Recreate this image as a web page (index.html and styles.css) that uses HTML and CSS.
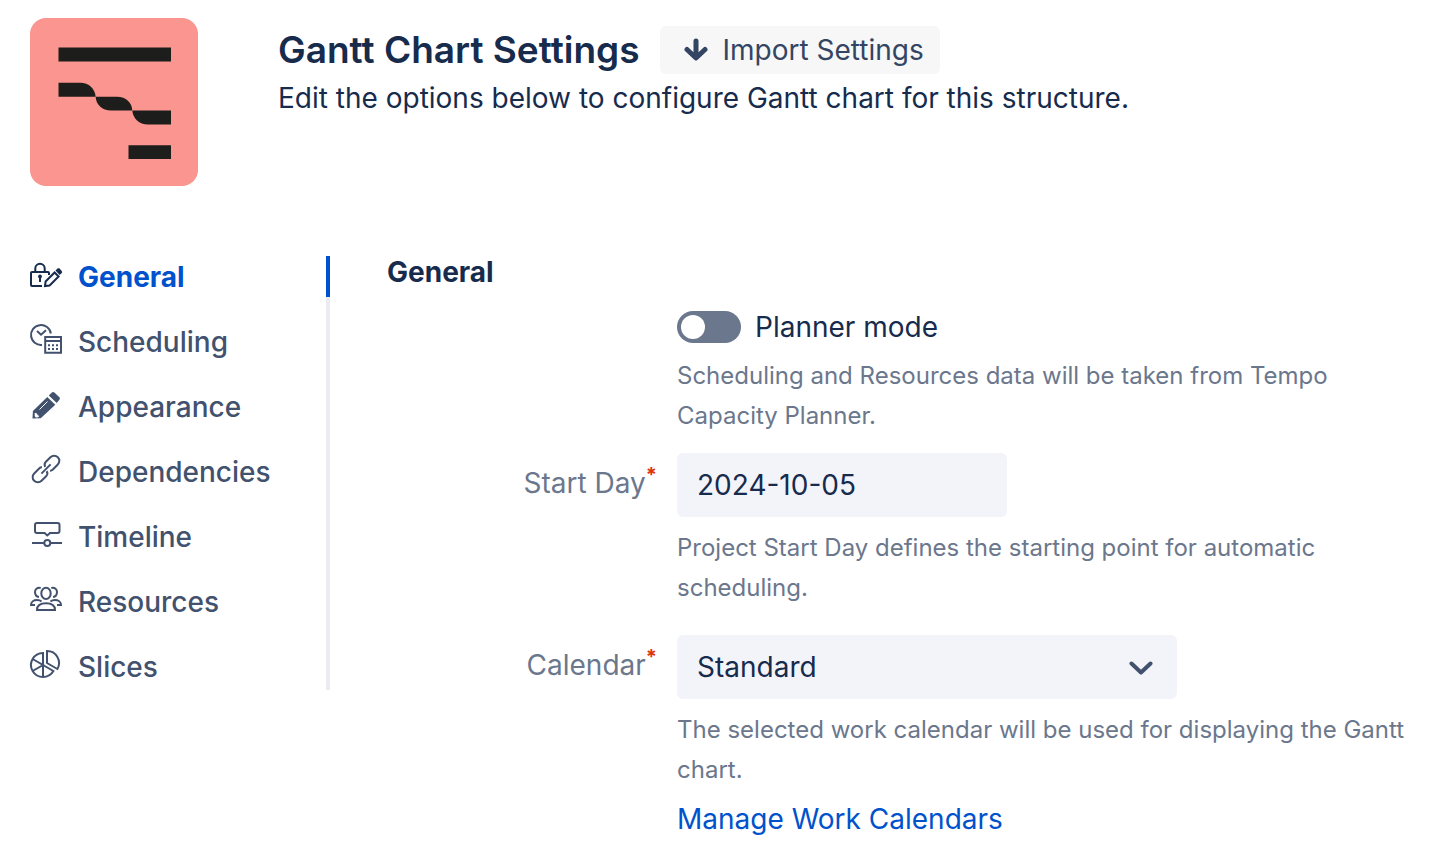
FILE: index.html
```html
<!DOCTYPE html>
<html lang="en">
<head>
    <meta charset="UTF-8">
    <meta name="viewport" content="width=device-width, initial-scale=1.0">
    <title>Gantt Chart Settings</title>
    <link rel="stylesheet" href="styles.css">
</head>
<body>
    <header class="header">
        <svg class="logo" viewBox="0 0 168 168" aria-hidden="true">
            <rect width="168" height="168" rx="16" fill="#fb958f"/>
            <g fill="#1d1e1b">
                <path d="M28.5 29.5H141v14H28.5z"/>
                <path d="M28.5 64.7H50c9 0 15 6 15.600 14H28.500z"/>
                <path d="M65.600 78.700H87c9 0 15 6 15.300 13.700H81c-9 0-15-6-15.400-13.700z"/>
                <path d="M102.300 92.400H141v14h-23c-9 0-15-6-15.700-14z"/>
                <path d="M98.500 127.300H141V141H98.500z"/>
            </g>
        </svg>
        <div class="header-text">
            <div class="title-row">
                <h1>Gantt Chart Settings</h1>
                <button type="button" class="import-button">
                    <svg class="arrow-icon" viewBox="0 0 24 24" aria-hidden="true">
                        <path d="M12 3v16M3 11.500l9 8.500 9-8.500"/>
                    </svg>
                    Import Settings
                </button>
            </div>
            <p>Edit the options below to configure Gantt chart for this structure.</p>
        </div>
    </header>

    <div class="content">
        <nav class="sidebar">
            <a href="#general" class="active">
                <svg viewBox="0 0 32 41" aria-hidden="true">
                    <path d="M5.300 16v-3.500a4.700 4.700 0 0 1 9.400 0V16M19 19v-2q0-1-1-1H2q-1 0-1 1v12q0 1 1 1h10"/>
                    <path d="M10 21v5"/>
                    <circle cx="10" cy="20.500" r="1.900" class="solid"/>
                    <path d="M15 30l.6-4.500 9-9 4 4-9 9z"/>
                    <path class="solid" d="M25.500 14.500l2.300-2.200h1.500l2.700 2.900v1.500L29.700 19z"/>
                </svg>
                General
            </a>
            <a href="#scheduling">
                <svg viewBox="0 0 32 41" aria-hidden="true">
                    <path d="M20.900 12.500A10 10 0 1 0 12 24M7 10l4 3.700 5-4.500"/>
                    <path d="M15.200 16H31v15.700H15.200zM15.200 20H31"/>
                    <path d="M18 24.300h2m2 0h2m2 0h2M18 28h2m2 0h2m2 0h2"/>
                </svg>
                Scheduling
            </a>
            <a href="#appearance">
                <svg viewBox="0 0 32 41" aria-hidden="true">
                    <path class="solid" d="M2.500 32.600l.4-7.600L17.300 11l8 7.700-14.600 13.500z"/>
                    <path class="solid" d="M18.800 9.600l3-3q1.300-1 2.600 0l5 4.700q1 1.200 0 2.500l-2.700 3.300z"/>
                    <path class="cut" d="M9.500 23.500l8-8"/>
                    <path class="cut-fill" d="M4.700 26.700l2.300.8.700 1.800 1.800.6-2 1.500-1.800.1-1-1.400z"/>
                </svg>
                Appearance
            </a>
            <a href="#dependencies">
                <svg viewBox="0 0 32 41" aria-hidden="true">
                    <g transform="rotate(-45 16 18)">
                        <path d="M17 16q.8-3.200 4-3.200h6.500a5.200 5.200 0 0 1 0 10.400H20.500q-1.800 0-2.800-1.200"/>
                        <path d="M15 20q-.8 3.200-4 3.200H4.500a5.200 5.200 0 0 1 0-10.400H11.500q1.800 0 2.800 1.200"/>
                        <path d="M9.500 18h13"/>
                    </g>
                </svg>
                Dependencies
            </a>
            <a href="#timeline">
                <svg viewBox="0 0 32 41" aria-hidden="true">
                    <path d="M7 7h20.500q2 0 2 2v6q0 2-2 2H20l-2.700 2.500-2.700-2.500H7q-2 0-2-2V9q0-2 2-2z"/>
                    <path d="M2 27h12M20.500 27H32"/>
                    <circle cx="17.300" cy="27" r="3"/>
                </svg>
                Timeline
            </a>
            <a href="#resources">
                <svg viewBox="0 0 32 41" aria-hidden="true">
                    <ellipse cx="16" cy="12.400" rx="4.700" ry="5.700"/>
                    <path d="M10.700 7C7 6 5 8.500 5 11q0 4.500 4 5M21.300 7C25 6 27 8.500 27 11q0 4.500-4 5"/>
                    <path d="M7 29c0-4 3-6.700 9-6.700s9 2.700 9 6.700z"/>
                    <path d="M5 24H1c0-3.500 3-5 6-5q3 0 4.500 1.500M27 24h4c0-3.500-3-5-6-5q-3 0-4.500 1.500"/>
                </svg>
                Resources
            </a>
            <a href="#slices">
                <svg viewBox="0 0 32 41" aria-hidden="true">
                    <path d="M13 7a12 12 0 1 0 10.400 18L13 19zM13 19v12M2.600 13L13 19 2.600 25"/>
                    <path d="M17 5v12l10.400 6A12 12 0 0 0 17 5z"/>
                </svg>
                Slices
            </a>
        </nav>

        <main class="settings">
            <h2>General</h2>
            <form>
                <div class="field">
                    <div class="field-body">
                        <div class="toggle-row">
                            <input type="checkbox" id="plannerMode" class="toggle">
                            <label for="plannerMode">Planner mode</label>
                        </div>
                        <p class="help">Scheduling and Resources data will be taken from Tempo Capacity Planner.</p>
                    </div>
                </div>

                <div class="field">
                    <label class="field-label" for="startDay">Start Day<span class="required">*</span></label>
                    <div class="field-body">
                        <input type="text" id="startDay" class="text-input" value="2024-10-05">
                        <p class="help">Project Start Day defines the starting point for automatic scheduling.</p>
                    </div>
                </div>

                <div class="field">
                    <label class="field-label" for="calendar">Calendar<span class="required">*</span></label>
                    <div class="field-body">
                        <div class="select-box">
                            <select id="calendar">
                                <option>Standard</option>
                            </select>
                            <svg viewBox="0 0 24 24" aria-hidden="true">
                                <path d="M2.500 8.500l9.500 9 9.500-9"/>
                            </svg>
                        </div>
                        <p class="help">The selected work calendar will be used for displaying the Gantt chart.</p>
                        <a href="#calendars" class="manage-link">Manage Work Calendars</a>
                    </div>
                </div>
            </form>
        </main>
    </div>
</body>
</html>
```
FILE: styles.css
```css
/* Basic Styles */
* {
    box-sizing: border-box;
}

body {
    font-family: Inter, sans-serif;
    font-size: 28px;
    line-height: 40px;
    color: #172b4d;
    background-color: white;
    margin: 0;
    padding: 18px 30px 16px;
}

h1, h2, p {
    margin: 0;
}

a {
    text-decoration: none;
}

/* Header */
.header {
    display: flex;
    gap: 80px;
    margin-bottom: 70px;
}

.logo {
    width: 168px;
    height: 168px;
    flex-shrink: 0;
}

.header-text {
    padding-top: 8px;
}

.title-row {
    display: flex;
    align-items: center;
    gap: 20px;
    margin-bottom: 4px;
}

h1 {
    font-size: 37px;
    font-weight: 600;
    line-height: 48px;
}

.import-button {
    display: flex;
    align-items: center;
    gap: 15px;
    height: 48px;
    padding: 0 16px 0 24px;
    font: inherit;
    color: #344563;
    background-color: #f7f7f7;
    border: none;
    border-radius: 6px;
    cursor: pointer;
}

.arrow-icon {
    width: 24px;
    height: 24px;
    fill: none;
    stroke: #344563;
    stroke-width: 5;
    stroke-linecap: round;
    stroke-linejoin: round;
}

.content {
    display: flex;
    align-items: flex-start;
    gap: 57px;
}

/* Sidebar */
.sidebar {
    display: flex;
    flex-direction: column;
    gap: 24px;
    width: 300px;
    flex-shrink: 0;
    padding-bottom: 3px;
    border-right: 4px solid #ebecf0;
}

.sidebar a {
    display: flex;
    align-items: center;
    gap: 16px;
    height: 41px;
    margin-right: -4px;
    font-weight: 500;
    color: #42526e;
}

.sidebar a.active {
    font-weight: 700;
    color: #0052cc;
    border-right: 4px solid #0052cc;
}

.sidebar svg {
    width: 32px;
    height: 41px;
    flex-shrink: 0;
    overflow: visible;
    fill: none;
    stroke: #42526e;
    stroke-width: 2;
}

.sidebar .active svg {
    stroke: #172b4d;
}

.sidebar .solid {
    fill: #42526e;
    stroke: none;
}

.sidebar .active .solid {
    fill: #172b4d;
}

.sidebar .cut {
    stroke: white;
    stroke-width: 1;
}

.sidebar .cut-fill {
    fill: white;
    stroke: none;
}

/* Settings form */
.settings {
    flex: 1;
    min-width: 0;
}

h2 {
    font-size: 28px;
    font-weight: 700;
    line-height: 32px;
    margin-bottom: 23px;
}

.field {
    display: grid;
    grid-template-columns: 270px 1fr;
    column-gap: 20px;
    margin-bottom: 27px;
}

.field:first-child {
    margin-bottom: 17px;
}

.field:last-child {
    margin-bottom: 0;
}

.field-body {
    grid-column: 2;
}

.field-label {
    line-height: 60px;
    text-align: right;
    color: #6b778c;
}

.required {
    font-size: 20px;
    font-weight: 700;
    line-height: 1;
    vertical-align: 11px;
    color: #de350b;
}

.toggle-row {
    display: flex;
    align-items: center;
    gap: 14px;
    height: 32px;
    margin-bottom: 13px;
}

.toggle {
    appearance: none;
    width: 64px;
    height: 32px;
    margin: 0;
    padding: 4px;
    background-color: #6b778c;
    border-radius: 16px;
    cursor: pointer;
}

.toggle::before {
    content: "";
    display: block;
    width: 24px;
    height: 24px;
    background-color: white;
    border-radius: 50%;
}

.toggle:checked {
    background-color: #0052cc;
}

.toggle:checked::before {
    margin-left: auto;
}

.text-input,
.select-box select {
    appearance: none;
    display: block;
    height: 64px;
    padding: 0 20px;
    font: inherit;
    color: #172b4d;
    background-color: #f3f4f9;
    border: none;
    border-radius: 6px;
}

.text-input {
    width: 330px;
}

.select-box {
    position: relative;
    max-width: 500px;
}

.select-box select {
    width: 100%;
}

.select-box svg {
    position: absolute;
    top: 20px;
    right: 24px;
    width: 24px;
    height: 24px;
    fill: none;
    stroke: #42526e;
    stroke-width: 4;
    stroke-linecap: round;
    stroke-linejoin: round;
    pointer-events: none;
}

.help {
    margin-top: 11px;
    font-size: 24px;
    color: #6b778c;
}

.manage-link {
    display: inline-block;
    margin-top: 9px;
    color: #0052cc;
}
```
